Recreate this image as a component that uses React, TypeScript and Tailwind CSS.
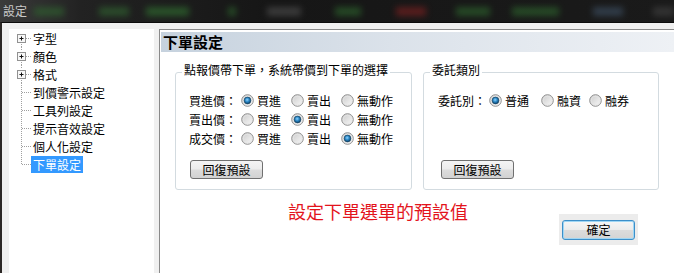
import React from "react";

function Radio({ checked }: { checked?: boolean }) {
  return (
    <svg width="13" height="13" viewBox="0 0 13 13" className="shrink-0">
      <defs>
        <linearGradient id="rg-out" x1="0" y1="0" x2="1" y2="1">
          <stop offset="0" stopColor="#c9c9c9" />
          <stop offset="1" stopColor="#fbfbfb" />
        </linearGradient>
        <radialGradient id="rg-in" cx="0.45" cy="0.4" r="0.6">
          <stop offset="0" stopColor="#8fd3ff" />
          <stop offset="0.5" stopColor="#2a86c4" />
          <stop offset="1" stopColor="#0b3f66" />
        </radialGradient>
      </defs>
      <circle cx="6.5" cy="6.5" r="5.8" fill="url(#rg-out)" stroke="#8f8f8f" strokeWidth="1" />
      <circle cx="6.5" cy="6.5" r="4.3" fill="none" stroke="#e6e6e6" strokeWidth="0.8" />
      {checked && <circle cx="6.5" cy="6.5" r="3.4" fill="url(#rg-in)" stroke="#12405f" strokeWidth="0.6" />}
    </svg>
  );
}

function Option({ label, checked, w }: { label: string; checked?: boolean; w: string }) {
  return (
    <div className={`flex items-center shrink-0 whitespace-nowrap ${w}`}>
      <Radio checked={checked} />
      <span className="ml-[3px] whitespace-nowrap">{label}</span>
    </div>
  );
}

function Btn({ label, cls }: { label: string; cls?: string }) {
  return (
    <div
      className={`w-[73px] h-[19px] flex items-center justify-center rounded-[3px] border border-[#707070] bg-[linear-gradient(#f4f4f4_0%,#ececec_48%,#dcdcdc_52%,#d2d2d2_100%)] text-[12px] leading-none text-black ${cls ?? ""}`}
    >
      {label}
    </div>
  );
}

type TreeItem = { label: string; expand?: boolean; selected?: boolean };

function Connector({ idx, total, expand }: { idx: number; total: number; expand?: boolean }) {
  const first = idx === 0;
  const last = idx === total - 1;
  const dot = { stroke: "#a0a0a0", strokeWidth: 1, strokeDasharray: "1 1" };
  return (
    <svg width="22" height="18" viewBox="0 0 22 18" className="shrink-0">
      {expand ? (
        <>
          {!first && <line x1="12.5" y1="0" x2="12.5" y2="4" {...dot} />}
          {!last && <line x1="12.5" y1="13" x2="12.5" y2="18" {...dot} />}
          <line x1="17" y1="9.5" x2="22" y2="9.5" {...dot} />
          <rect x="8.5" y="5.5" width="8" height="8" fill="#f7f7f7" stroke="#919191" />
          <line x1="10.5" y1="9.5" x2="14.5" y2="9.5" stroke="#111" />
          <line x1="12.5" y1="7.5" x2="12.5" y2="11.5" stroke="#111" />
        </>
      ) : (
        <>
          <line x1="12.5" y1="0" x2="12.5" y2={last ? 10 : 18} {...dot} />
          <line x1="13" y1="9.5" x2="22" y2="9.5" {...dot} />
        </>
      )}
    </svg>
  );
}

const treeItems: TreeItem[] = [
  { label: "字型", expand: true },
  { label: "顏色", expand: true },
  { label: "格式", expand: true },
  { label: "到價警示設定" },
  { label: "工具列設定" },
  { label: "提示音效設定" },
  { label: "個人化設定" },
  { label: "下單設定", selected: true },
];

export default function App() {
  return (
    <div className="w-[674px] h-[273px] overflow-hidden bg-[#f0f0f0] font-['Noto_Sans_CJK_TC','Noto_Sans',sans-serif] text-[12px] text-black">
      {/* Title bar */}
      <div className="h-[22px] flex items-center bg-[linear-gradient(90deg,#3b3b3b_0%,#222_12%,#161616_40%,#1a1a1a_100%)] overflow-hidden">
        <span className="ml-[3px] w-[24px] shrink-0 text-[12px] leading-none text-[#c9c9c9]">設定</span>
        <div className="ml-[7px] w-[30px] shrink-0 h-[9px] bg-[#2f5e2f] blur-[3px] opacity-70" />
        <div className="ml-[35px] w-[30px] shrink-0 h-[9px] bg-[#2f5e2f] blur-[3px] opacity-70" />
        <div className="ml-[17px] w-[43px] shrink-0 h-[9px] bg-[#2f6a2f] blur-[3px] opacity-70" />
        <div className="ml-[39px] w-[8px] shrink-0 h-[9px] bg-[#2f6a2f] blur-[3px] opacity-60" />
        <div className="ml-[31px] w-[34px] shrink-0 h-[9px] bg-[#4a4a4a] blur-[3px] opacity-70" />
        <div className="ml-[34px] w-[26px] shrink-0 h-[9px] bg-[#2f6a2f] blur-[3px] opacity-60" />
        <div className="ml-[35px] w-[30px] shrink-0 h-[9px] bg-[#6a1f1f] blur-[3px] opacity-80" />
        <div className="ml-[30px] w-[34px] shrink-0 h-[9px] bg-[#2f6a2f] blur-[3px] opacity-60" />
        <div className="ml-[22px] w-[47px] shrink-0 h-[9px] bg-[#2f6a2f] blur-[3px] opacity-60" />
        <div className="ml-[34px] w-[30px] shrink-0 h-[9px] bg-[#3b4c5e] blur-[3px] opacity-70" />
        <div className="ml-[30px] w-[21px] shrink-0 h-[9px] bg-[#444] blur-[3px] opacity-60" />
      </div>

      {/* Window body */}
      <div className="flex h-[251px] border-t border-t-[#0c0c0c] border-l-2 border-l-[#2c2826] pt-[6px] pl-[7px]">
        {/* Tree */}
        <div className="w-[145px] shrink-0 h-full bg-white flex flex-col">
          {treeItems.map((it, i) => (
            <div key={it.label} className="h-[18px] flex items-center">
              <Connector idx={i} total={treeItems.length} expand={it.expand} />
              <span
                className={`h-[17px] px-[2px] leading-[17px] text-[12px] whitespace-nowrap ${
                  it.selected ? "bg-[#3399ff] text-white" : "text-black"
                }`}
              >
                {it.label}
              </span>
            </div>
          ))}
        </div>

        {/* Right panel */}
        <div className="ml-[5px] flex-1 h-full bg-white border-l border-t border-[#8a8a8a] flex flex-col">
          <div className="mt-[2px] ml-[1px] h-[20px] flex items-center pl-[2px] bg-[linear-gradient(90deg,#c6d2de_0%,#dbe2ea_45%,#eef1f5_100%)]">
            <span className="text-[15px] font-bold leading-[20px] text-black">下單設定</span>
          </div>

          <div className="mt-[20px] pl-[15px] flex gap-[11px]">
            {/* Box 1 */}
            <div className="relative w-[237px] shrink-0 h-[118px] rounded-[3px] border border-[#d3dbe0] pt-[18px] pl-[13px]">
              <span className="absolute left-[6px] top-[-10px] bg-white px-[2px] leading-[14px] text-[12px] whitespace-nowrap">
                點報價帶下單，系統帶價到下單的選擇
              </span>
              <div className="h-[19px] flex items-center">
                <span className="w-[52px] shrink-0 whitespace-nowrap">買進價：</span>
                <Option label="買進" checked w="w-[50px]" />
                <Option label="賣出" w="w-[50px]" />
                <Option label="無動作" w="w-[56px]" />
              </div>
              <div className="h-[19px] flex items-center">
                <span className="w-[52px] shrink-0 whitespace-nowrap">賣出價：</span>
                <Option label="買進" w="w-[50px]" />
                <Option label="賣出" checked w="w-[50px]" />
                <Option label="無動作" w="w-[56px]" />
              </div>
              <div className="h-[19px] flex items-center">
                <span className="w-[52px] shrink-0 whitespace-nowrap">成交價：</span>
                <Option label="買進" w="w-[50px]" />
                <Option label="賣出" w="w-[50px]" />
                <Option label="無動作" checked w="w-[56px]" />
              </div>
              <Btn label="回復預設" cls="mt-[12px] ml-[1px]" />
            </div>

            {/* Box 2 */}
            <div className="relative w-[236px] shrink-0 h-[118px] rounded-[3px] border border-[#d3dbe0] pt-[18px] pl-[14px]">
              <span className="absolute left-[6px] top-[-10px] bg-white px-[2px] leading-[14px] text-[12px] whitespace-nowrap">
                委託類別
              </span>
              <div className="h-[19px] flex items-center">
                <span className="w-[51px] shrink-0 whitespace-nowrap">委託別：</span>
                <Option label="普通" checked w="w-[52px]" />
                <Option label="融資" w="w-[48px]" />
                <Option label="融券" w="w-[48px]" />
              </div>
              <Btn label="回復預設" cls="mt-[50px] ml-[3px]" />
            </div>
          </div>

          <div className="mt-[10px] flex items-start">
            <span className="ml-[128px] shrink-0 whitespace-nowrap text-[18px] leading-[22px] text-[#e3141c]">設定下單選單的預設值</span>
            <div className="ml-[91px] mt-[14px] shrink-0 w-[79px] h-[31px] bg-[#ececec] flex items-center justify-center">
              <div className="w-[73px] h-[20px] flex items-center justify-center rounded-[3px] border border-[#3d8fc9] shadow-[inset_0_0_0_1px_#9fd6f4] bg-[linear-gradient(#f6f6f6_0%,#ececec_48%,#dcdcdc_52%,#d4d4d4_100%)] text-[12px] leading-none">
                確定
              </div>
            </div>
          </div>
        </div>
      </div>
    </div>
  );
}
